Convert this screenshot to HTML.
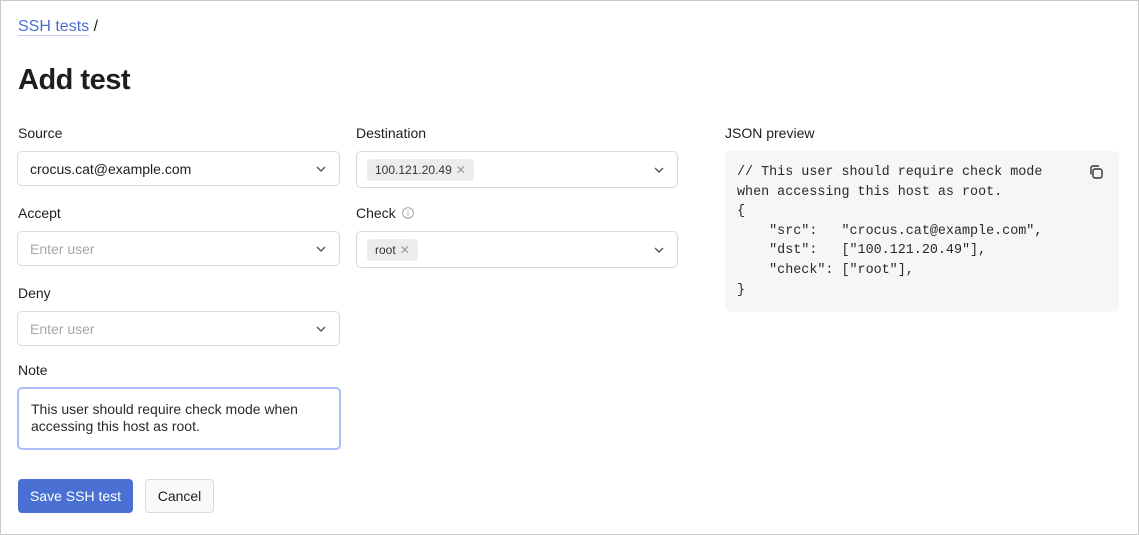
<!DOCTYPE html>
<html><head><style>
*{box-sizing:border-box;margin:0;padding:0}
body{width:1139px;height:535px;background:#fff;font-family:"Liberation Sans",sans-serif;color:#1f1e1e;position:relative;overflow:hidden}
.frame{position:absolute;left:0;top:0;width:1139px;height:535px;border:1px solid #c8c8c8}
.a{position:absolute}
.lbl{font-size:14px;color:#1f1e1e}
.inp{position:absolute;border:1px solid #dcdad8;border-radius:5px;background:#fff;font-size:14px;display:flex;align-items:center;padding-left:12px}
.ph{color:#a9a6a4}
.chev{position:absolute;right:12px;top:50%;margin-top:-4px}
.chip{background:#eeeceb;border-radius:4px;font-size:12px;padding:4px 8px;color:#333;margin-left:-2px;display:flex;align-items:center;gap:4px}
.chip span{color:#999;font-size:12px}
</style></head><body>
<div class="frame"></div>
<div class="a" style="left:18px;top:18px;font-size:16px"><span style="color:#4a6fd0;border-bottom:1px solid #c3cff0">SSH tests</span> /</div>
<div class="a" style="left:18px;top:64px;font-size:29px;font-weight:bold;letter-spacing:-0.5px">Add test</div>

<div class="a lbl" style="left:18px;top:125px">Source</div>
<div class="inp" style="left:17px;top:151px;width:323px;height:35px">crocus.cat@example.com<svg class="chev" width="12" height="8" viewBox="0 0 12 8"><path d="M2 2l4 4 4-4" fill="none" stroke="#555" stroke-width="1.4"/></svg></div>
<div class="a lbl" style="left:18px;top:205px">Accept</div>
<div class="inp" style="left:17px;top:231px;width:323px;height:35px"><span class="ph">Enter user</span><svg class="chev" width="12" height="8" viewBox="0 0 12 8"><path d="M2 2l4 4 4-4" fill="none" stroke="#555" stroke-width="1.4"/></svg></div>
<div class="a lbl" style="left:18px;top:285px">Deny</div>
<div class="inp" style="left:17px;top:311px;width:323px;height:35px"><span class="ph">Enter user</span><svg class="chev" width="12" height="8" viewBox="0 0 12 8"><path d="M2 2l4 4 4-4" fill="none" stroke="#555" stroke-width="1.4"/></svg></div>
<div class="a lbl" style="left:18px;top:362px">Note</div>
<div class="a" style="left:17px;top:387px;width:324px;height:63px;border:2px solid #aabff5;border-radius:5px;padding:12px 12px;font-size:14px;line-height:17px;color:#2a2a2a">This user should require check mode when accessing this host as root.</div>
<div class="a" style="left:18px;top:479px;width:115px;height:34px;background:#4a70d3;border-radius:4px;color:#fff;font-size:14px;display:flex;align-items:center;justify-content:center">Save SSH test</div>
<div class="a" style="left:145px;top:479px;width:69px;height:34px;background:#faf9f8;border:1px solid #dcdad8;border-radius:4px;font-size:14px;display:flex;align-items:center;justify-content:center">Cancel</div>

<div class="a lbl" style="left:356px;top:125px">Destination</div>
<div class="inp" style="left:356px;top:151px;width:322px;height:37px;padding-left:12px"><div class="chip">100.121.20.49 <span>✕</span></div><svg class="chev" width="12" height="8" viewBox="0 0 12 8"><path d="M2 2l4 4 4-4" fill="none" stroke="#555" stroke-width="1.4"/></svg></div>
<div class="a lbl" style="left:356px;top:205px">Check <svg width="12" height="12" viewBox="0 0 12 12" style="vertical-align:-1px;margin-left:2px"><circle cx="6" cy="6" r="5.3" fill="none" stroke="#999" stroke-width="0.9"/><path d="M6 5.2v3.3M6 3.3v.6" stroke="#999" stroke-width="1"/></svg></div>
<div class="inp" style="left:356px;top:231px;width:322px;height:37px;padding-left:12px"><div class="chip">root <span>✕</span></div><svg class="chev" width="12" height="8" viewBox="0 0 12 8"><path d="M2 2l4 4 4-4" fill="none" stroke="#555" stroke-width="1.4"/></svg></div>

<div class="a lbl" style="left:725px;top:125px">JSON preview</div>
<div class="a" style="left:725px;top:151px;width:394px;height:161px;background:#f8f6f4;border-radius:6px"></div>
<pre class="a" style="left:737px;top:163px;font-family:'Liberation Mono',monospace;font-size:13.4px;line-height:19.6px;color:#2a2a2a">// This user should require check mode
when accessing this host as root.
{
    "src":   "crocus.cat@example.com",
    "dst":   ["100.121.20.49"],
    "check": ["root"],
}</pre>
<svg class="a" style="left:1088px;top:164px" width="16" height="16" viewBox="0 0 16 16"><rect x="5" y="5" width="9" height="9" rx="2" fill="none" stroke="#333" stroke-width="1.4"/><path d="M3 10.5V4a2 2 0 0 1 2-2h6" fill="none" stroke="#333" stroke-width="1.4"/></svg>
</body></html>
